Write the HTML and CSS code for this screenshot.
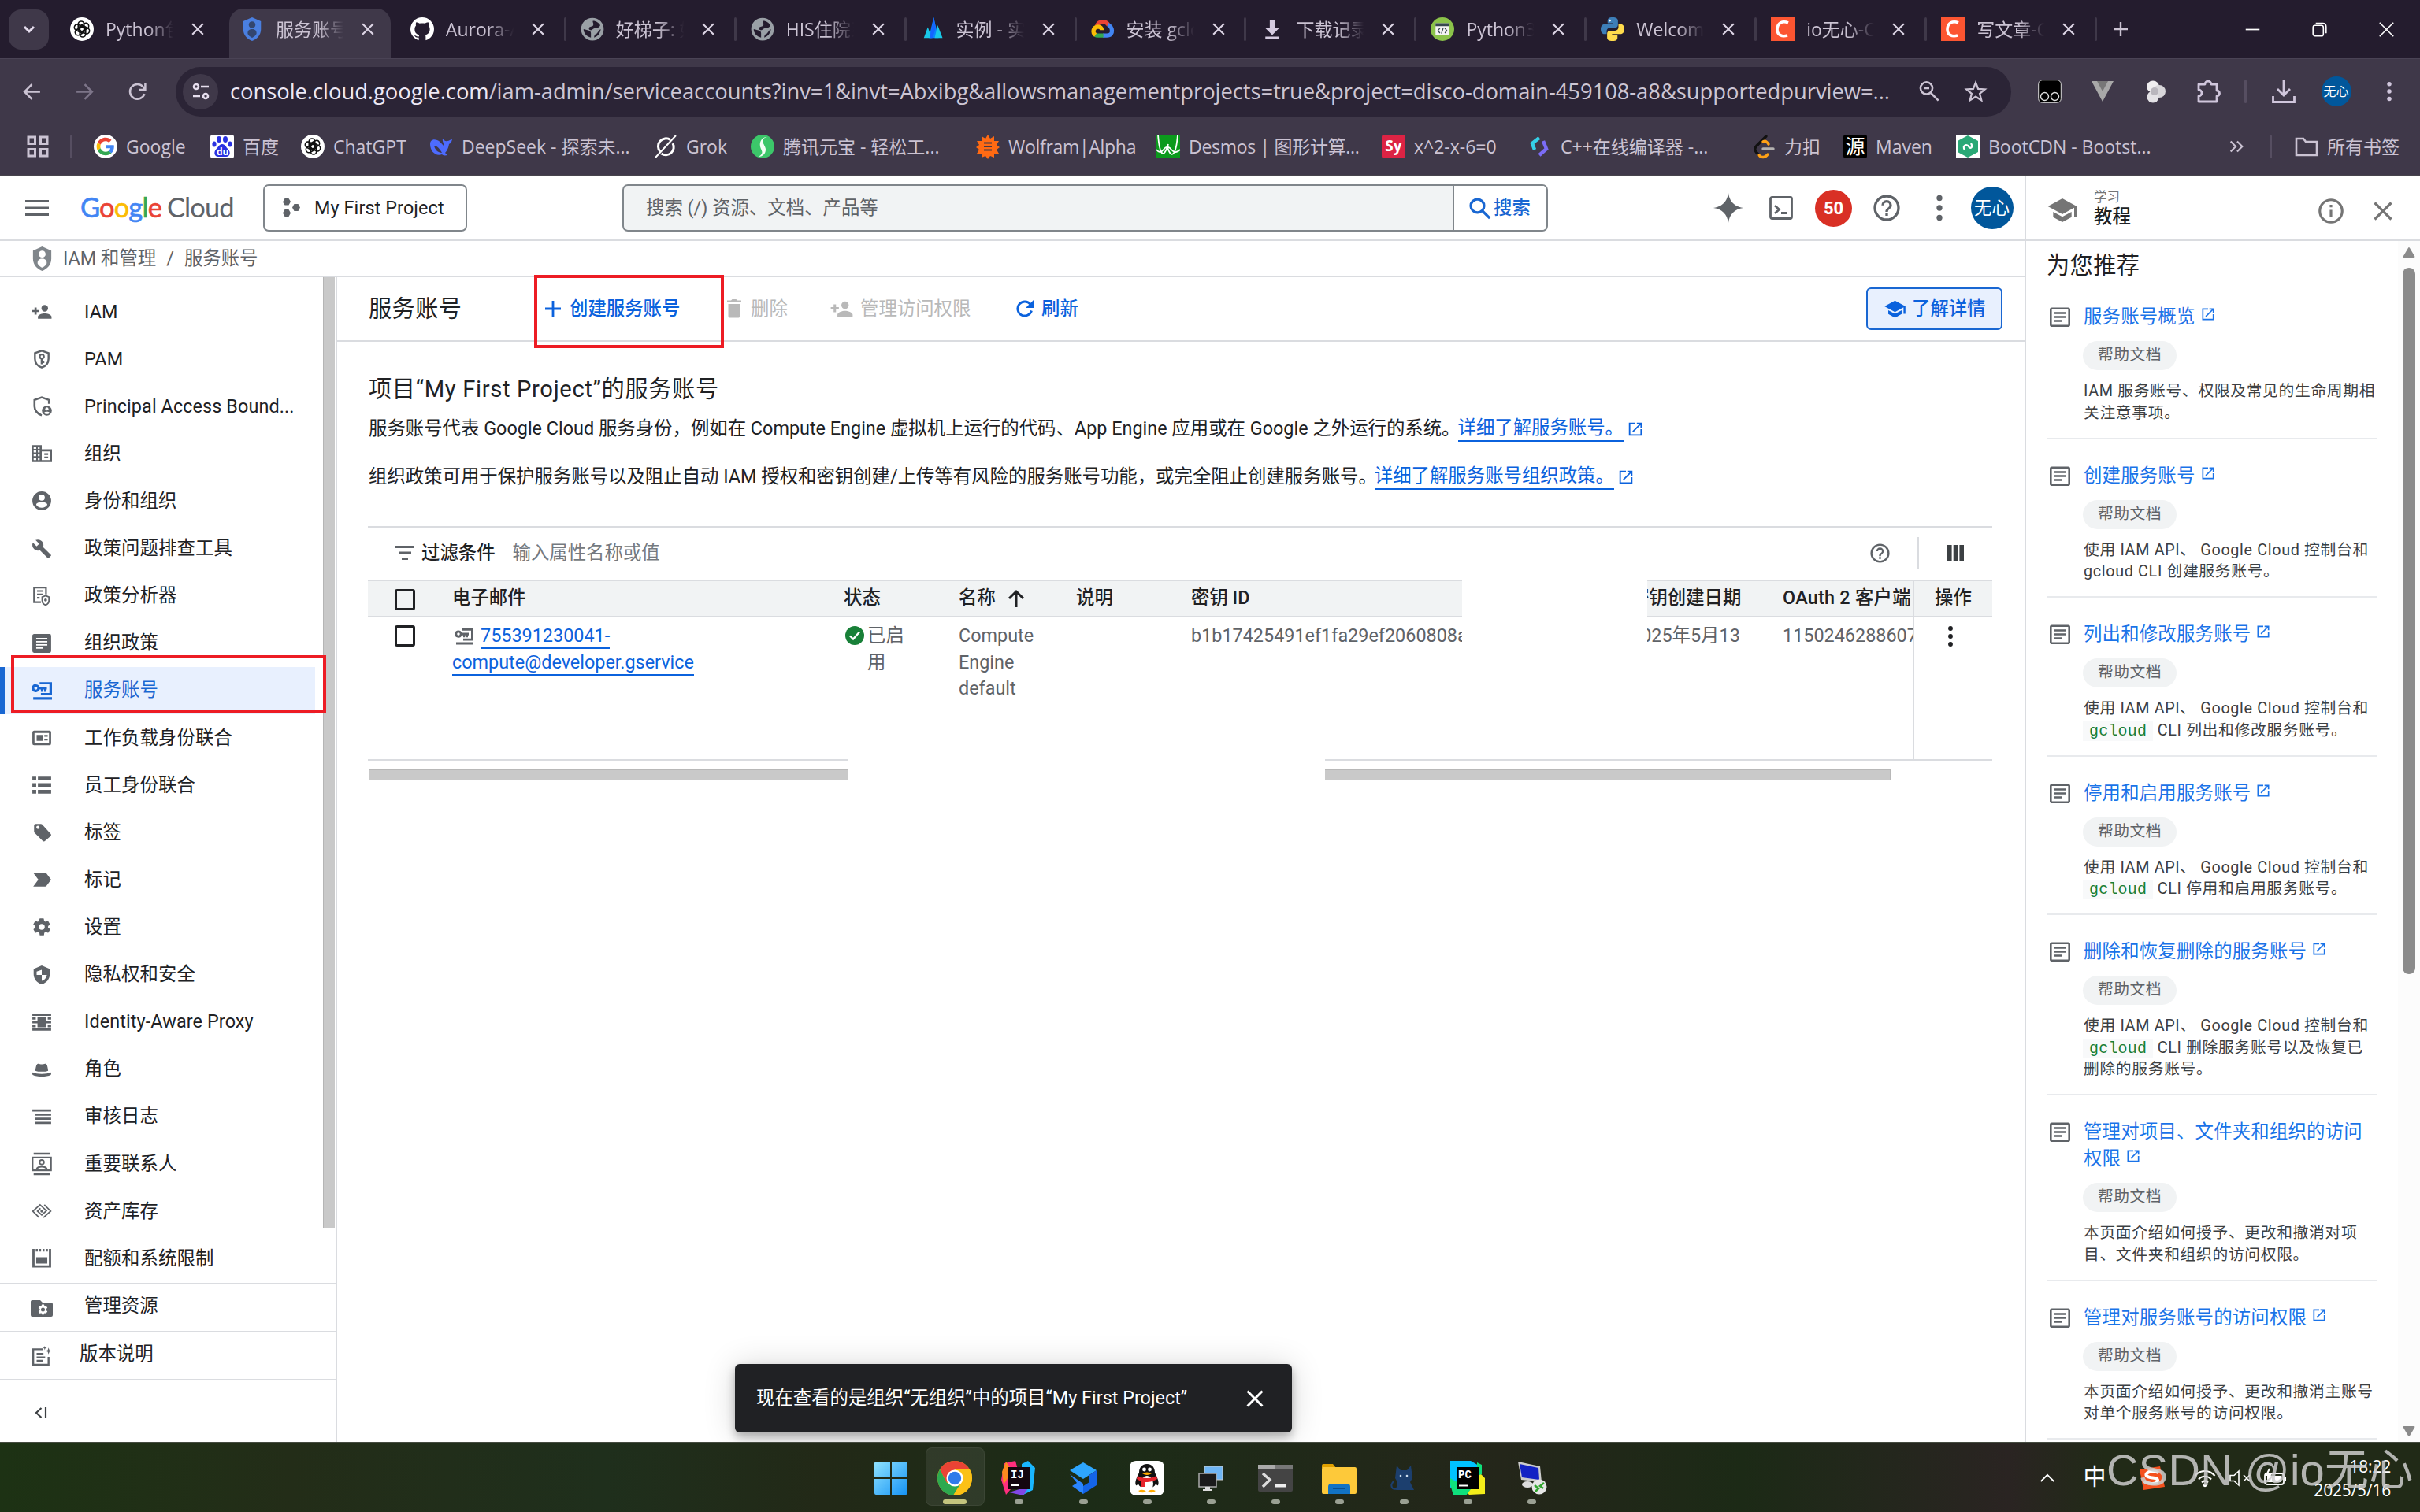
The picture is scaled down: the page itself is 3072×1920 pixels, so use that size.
FILE: index.html
```html
<!DOCTYPE html>
<html lang="zh-CN">
<head>
<meta charset="utf-8">
<title>服务账号 – IAM 和管理</title>
<link rel="stylesheet" href="styles.css">
</head>
<body>
<svg class="defs" aria-hidden="true">
  <symbol id="close" viewBox="0 0 24 24"><path d="M19 6.400 17.600 5 12 10.600 6.400 5 5 6.400 10.600 12 5 17.600 6.400 19 12 13.400 17.600 19 19 17.600 13.400 12z"/></symbol>
  <symbol id="openai" viewBox="0 0 24 24"><circle cx="12" cy="12" r="12" fill="#fff"/><g fill="none" stroke="#111" stroke-width="1.300"><rect x="8.200" y="4" width="6" height="10.500" rx="3"/><rect x="8.200" y="4" width="6" height="10.500" rx="3" transform="rotate(60 12 12)"/><rect x="8.200" y="4" width="6" height="10.500" rx="3" transform="rotate(120 12 12)"/><rect x="8.200" y="4" width="6" height="10.500" rx="3" transform="rotate(180 12 12)"/><rect x="8.200" y="4" width="6" height="10.500" rx="3" transform="rotate(240 12 12)"/><rect x="8.200" y="4" width="6" height="10.500" rx="3" transform="rotate(300 12 12)"/></g></symbol>
  <symbol id="globe" viewBox="0 0 24 24"><circle cx="12" cy="12" r="11.500" fill="#9aa0a6"/><path fill="#241c2e" d="M10.500 20.500C6 19.500 3 16 3 12l4 1c2 .4 3.500 1 3.500 3zM12.500 3.500c3.500 0 6 2 7.500 4.500-1 2.500-3 3-5 3-2.500 0-3 2.500-5 2s-2-3 0-3.500 3-.5 3-2.500-1-2-.5-3.500zM20.500 12c-.5 4.500-3.300 7.500-6.800 8.500.2-2 .5-3 2-3.500 2-.8 2-3.500 4.800-5z"/></symbol>
  <symbol id="iamshield" viewBox="0 0 24 24"><path d="M12 0 21 4v8c0 6-4 10-9 12-5-2-9-6-9-12V4z"/><circle cx="12" cy="7.500" r="3.400" fill="var(--hole)"/><path fill="var(--hole)" d="M12 12c3.500 0 4.500 2 4.500 4.200 0 1.600-2.500 3.600-4.500 4.600-2-1-4.500-3-4.500-4.600C7.500 14 8.500 12 12 12z"/></symbol>
  <symbol id="csdn" viewBox="0 0 30 30"><rect width="30" height="30" fill="#fc5531"/><path d="M22 7c-7-3-14 0-14 8.500 0 7 6 9.500 13 7.500" fill="none" stroke="#fff" stroke-width="3.600"/></symbol>
  <symbol id="python" viewBox="0 0 24 24"><path fill="#3d7eb8" d="M12 0C8 0 7 1.500 7 3.500V6h5.500v1H4C1.500 7 0 9 0 12s1.500 5 3.500 5H6v-3c0-2 1.500-3.500 3.500-3.500h5c1.700 0 3-1.300 3-3v-4C17.500 1.500 16 0 12 0z"/><path fill="#ffdb4c" d="M12 24c4 0 5-1.500 5-3.500V18h-5.500v-1H20c2.500 0 4-2 4-5s-1.500-5-3.500-5H18v3c0 2-1.500 3.500-3.500 3.500h-5c-1.700 0-3 1.300-3 3v4c0 2 1.500 3.500 5.500 3.500z"/><circle cx="9.300" cy="3.200" r="1.100" fill="#fff"/></symbol>
  <symbol id="personadd" viewBox="0 0 24 24"><path d="M15.500 11.800a3.900 3.900 0 1 0 0-7.800 3.900 3.900 0 0 0 0 7.800zM6 10V7H3.500v3H.5v2.300h3v3H6v-3h3V10zm9.500 3.800c-2.670 0-8 1.340-8 4V20h16v-2.200c0-2.660-5.330-4-8-4z"/></symbol>
  <symbol id="svcacct" viewBox="0 0 24 24"><path fill-rule="evenodd" d="M5 4.500a4.600 4.600 0 1 0 4.300 6.200H11v2.600h2.300v-2.600h1.400v2.600H17v-2.600h1V7.500H9.300A4.600 4.600 0 0 0 5 4.500zm0 2.800a1.800 1.800 0 1 1 0 3.600 1.800 1.800 0 0 1 0-3.600z"/><path d="M9.500 2H24v15.500H11v-2.700h10V4.700H9.500zM2 19.600h22v3H2z"/></symbol>
  <symbol id="cap" viewBox="0 0 24 24"><path d="M5 13.200v4L12 21l7-3.800v-4L12 17zM12 3 1 9l11 6 9-4.900V17h2V9z"/></symbol>
  <symbol id="ext" viewBox="0 0 24 24"><path d="M19 19H5V5h7V3H3v18h18v-9h-2zM14 3v2h3.600L7.800 14.800l1.400 1.400L19 6.400V10h2V3z"/></symbol>
  <symbol id="doc" viewBox="0 0 26 26"><rect x="1.300" y="1.800" width="23.400" height="22" rx="1.500" fill="none" stroke="currentColor" stroke-width="2.600"/><path d="M5.500 7.500h15M5.500 12.500h15M5.500 17.500h10" stroke="currentColor" stroke-width="2.400"/></symbol>
  <symbol id="help" viewBox="0 0 24 24"><path d="M11 18h2v-2h-2zm1-16a10 10 0 1 0 0 20 10 10 0 0 0 0-20zm0 18a8 8 0 1 1 0-16 8 8 0 0 1 0 16zm0-14a4 4 0 0 0-4 4h2a2 2 0 1 1 4 0c0 2-3 1.750-3 5h2c0-2.250 3-2.500 3-5a4 4 0 0 0-4-4z"/></symbol>
  <symbol id="more" viewBox="0 0 24 24"><circle cx="12" cy="4.500" r="2.200"/><circle cx="12" cy="12" r="2.200"/><circle cx="12" cy="19.500" r="2.200"/></symbol>
  <symbol id="gear" viewBox="0 0 24 24"><path d="M19.400 13c0-.3.100-.6.100-1s0-.7-.1-1l2.100-1.600c.2-.2.300-.4.100-.7l-2-3.400c-.1-.2-.4-.3-.6-.2l-2.500 1c-.5-.4-1.100-.7-1.700-1l-.4-2.600c0-.3-.2-.5-.5-.5h-4c-.2 0-.4.200-.5.400l-.4 2.700c-.6.300-1.200.6-1.700 1l-2.500-1c-.2-.1-.5 0-.6.200l-2 3.400c-.1.300-.1.500.1.700L4.600 11c0 .3-.1.700-.1 1s0 .700.1 1l-2.100 1.600c-.2.200-.3.400-.1.700l2 3.400c.1.200.4.300.6.200l2.500-1c.5.400 1.100.7 1.700 1l.4 2.600c0 .3.200.5.500.5h4c.2 0 .4-.2.500-.4l.4-2.700c.6-.3 1.200-.6 1.700-1l2.500 1c.2.100.5 0 .6-.2l2-3.400c.1-.3.100-.5-.1-.7zM12 15.500a3.500 3.500 0 1 1 0-7 3.500 3.500 0 0 1 0 7z"/></symbol>
  <symbol id="google-g" viewBox="0 0 48 48"><circle cx="24" cy="24" r="24" fill="#fff"/><g transform="translate(6 6) scale(.75)"><path fill="#ea4335" d="M24 9.500c3.500 0 6.700 1.200 9.200 3.600l6.900-6.900C35.900 2.400 30.500 0 24 0 14.600 0 6.500 5.400 2.600 13.200l8 6.200C12.400 13.700 17.700 9.500 24 9.500z"/><path fill="#4285f4" d="M47 24.500c0-1.600-.2-3.100-.4-4.500H24v9h12.900c-.6 3-2.300 5.500-4.800 7.200l7.700 6C44.400 38 47 31.800 47 24.500z"/><path fill="#fbbc05" d="M10.500 28.600a14.500 14.500 0 0 1 0-9.200l-8-6.200a24 24 0 0 0 0 21.600z"/><path fill="#34a853" d="M24 48c6.500 0 11.900-2.100 15.900-5.800l-7.700-6c-2.200 1.500-4.900 2.300-8.200 2.300-6.300 0-11.600-4.200-13.500-9.900l-8 6.200C6.500 42.600 14.600 48 24 48z"/></g></symbol>
</svg>

<header class="chrome">
  <div class="tabstrip">
    <button class="tabsearch"><svg viewBox="0 0 24 24"><path d="m6 9 6 6 6-6" fill="none" stroke="currentColor" stroke-width="3"/></svg></button>
    <div class="tabs">
      <div class="tab nosep"><svg><use href="#openai"/></svg><span>Python包管</span><svg class="x"><use href="#close"/></svg></div>
      <div class="tab active"><svg class="blue"><use href="#iamshield"/></svg><span>服务账号 –</span><svg class="x"><use href="#close"/></svg></div>
      <div class="tab"><svg viewBox="0 0 24 24"><circle cx="12" cy="12" r="12" fill="#fff"/><path fill="#241c2e" d="M8.500 24v-3.500c-3 .6-3.600-1.200-4.500-2 1.800-.2 2 1.500 4.600 1l.4-1.700C6 17.300 4.300 15.500 4.300 12c0-1.500.5-2.700 1.300-3.700-.3-1.200-.2-2.500.3-3.400 1.300 0 2.400.6 3.400 1.300 1.800-.4 3.600-.4 5.400 0 1-.7 2.100-1.300 3.400-1.300.5.900.6 2.200.3 3.400.8 1 1.300 2.200 1.300 3.700 0 3.500-1.700 5.300-4.700 5.800.4.700.5 1.200.5 2V24z"/></svg><span>Aurora-Ad</span><svg class="x"><use href="#close"/></svg></div>
      <div class="tab"><svg><use href="#globe"/></svg><span>好梯子: 好</span><svg class="x"><use href="#close"/></svg></div>
      <div class="tab"><svg><use href="#globe"/></svg><span>HIS住院系</span><svg class="x"><use href="#close"/></svg></div>
      <div class="tab"><svg viewBox="0 0 24 24"><path fill="#0a84ff" d="m13 0 5 21H8z"/><path fill="#19c8e8" d="m7 10 4 11H3zM17 8l5 13h-8z"/><path fill="#1565ff" d="m13 0 2 11-3 10H9z"/></svg><span>实例 - 实例</span><svg class="x"><use href="#close"/></svg></div>
      <div class="tab"><svg viewBox="0 0 24 24"><g fill="none" stroke-width="4.200"><path stroke="#ea4335" d="M6 8.500C8 3.500 15 3 17.800 8"/><path stroke="#4285f4" d="M17 7.500c4.500 1.500 7 11-1 11h-4"/><path stroke="#34a853" d="M12.500 18.500H7c-1 0-2-.2-2.800-.8"/><path stroke="#fbbc05" d="M4.500 18C1 15.500 2 10 7 9.500c2 0 4 1.500 4 3.500"/></g></svg><span>安装 gclou</span><svg class="x"><use href="#close"/></svg></div>
      <div class="tab"><svg viewBox="0 0 24 24" class="pale"><path d="M9.500 3h5v8h4.500l-7 7-7-7h4.500zM5 19.500h14V22H5z"/></svg><span>下载记录</span><svg class="x"><use href="#close"/></svg></div>
      <div class="tab"><svg viewBox="0 0 24 24"><circle cx="12" cy="12" r="12" fill="#8bc34a"/><rect x="5" y="6" width="14" height="12" fill="#f4f4f4"/><path fill="#37474f" d="M5 6h14v3H5z"/><path d="m9.500 11-2 2.500 2 2.500m5-5 2 2.500-2 2.500M13 10.500l-2 6" fill="none" stroke="#37474f"/></svg><span>Python3.1</span><svg class="x"><use href="#close"/></svg></div>
      <div class="tab"><svg><use href="#python"/></svg><span>Welcome</span><svg class="x"><use href="#close"/></svg></div>
      <div class="tab"><svg><use href="#csdn"/></svg><span>io无心-CSD</span><svg class="x"><use href="#close"/></svg></div>
      <div class="tab"><svg><use href="#csdn"/></svg><span>写文章-CS</span><svg class="x"><use href="#close"/></svg></div>
    </div>
    <svg class="newtab" viewBox="0 0 24 24"><path d="M12 3v18M3 12h18" stroke="currentColor" stroke-width="2.400"/></svg>
    <div class="winctl">
      <svg viewBox="0 0 24 24"><path d="M2 12h20" stroke="#fff" stroke-width="2"/></svg>
      <svg viewBox="0 0 24 24"><g fill="none" stroke="#fff" stroke-width="1.800"><rect x="2.500" y="6" width="15" height="15.500" rx="3"/><path d="M6.500 3h10c3 0 5 2 5 5v9.500"/></g></svg>
      <svg viewBox="0 0 24 24"><path d="m2 2 20 20M22 2 2 22" stroke="#fff" stroke-width="1.800"/></svg>
    </div>
  </div>
  <div class="toolbar">
    <div class="navbtns">
      <svg viewBox="0 0 24 24"><path d="M22 12H3m9-9-9 9 9 9" fill="none" stroke="currentColor" stroke-width="2.400"/></svg>
      <svg viewBox="0 0 24 24" class="off"><path d="M2 12h19m-9-9 9 9-9 9" fill="none" stroke="currentColor" stroke-width="2.400"/></svg>
      <svg viewBox="0 0 24 24"><path d="M20.500 14.500A9 9 0 1 1 19 6.300L21 9M21.500 2v7.500H14" fill="none" stroke="currentColor" stroke-width="2.400"/></svg>
    </div>
    <div class="urlbar">
      <i class="siteinfo"><svg viewBox="0 0 24 24"><g fill="none" stroke="currentColor" stroke-width="2.600"><circle cx="6" cy="6" r="3"/><path d="M12 6h10M2 18h9"/><circle cx="18" cy="18" r="3"/></g></svg></i>
      <p class="url"><b>console.cloud.google.com</b>/iam-admin/serviceaccounts?inv=1&amp;invt=Abxibg&amp;allowsmanagementprojects=true&amp;project=disco-domain-459108-a8&amp;supportedpurview=...</p>
      <svg viewBox="0 0 24 24"><g fill="none" stroke="currentColor" stroke-width="2.200"><circle cx="9" cy="8.500" r="6.500"/><path d="M13.500 13.500 22 22M6 8.500h6"/></g></svg>
      <svg viewBox="0 0 24 24"><path d="m12 2.500 2.700 6.800 7.300.5-5.600 4.700 1.800 7.100-6.200-3.900-6.200 3.900 1.800-7.100L2 9.800l7.300-.5z" fill="none" stroke="currentColor" stroke-width="2"/></svg>
    </div>
    <div class="exts">
      <svg viewBox="0 0 30 30"><rect x=".7" y=".7" width="28.600" height="28.600" rx="5" fill="#000" stroke="#ddd"/><circle cx="8.500" cy="21.500" r="5" fill="none" stroke="#ddd" stroke-width="1.500"/><circle cx="21.500" cy="21.500" r="5" fill="none" stroke="#ddd" stroke-width="1.500"/></svg>
      <svg viewBox="0 0 30 30"><path d="M1 2h28L15 28z" fill="#a8a8a8"/><path d="M8 2h14l-7 13z" fill="#777"/></svg>
      <svg viewBox="0 0 30 30"><ellipse cx="12" cy="9" rx="8" ry="7.500" fill="#f0eef0"/><circle cx="20" cy="15" r="8" fill="#d8d6da"/><circle cx="12" cy="22" r="7.500" fill="#e4e2e6"/><circle cx="14" cy="15" r="5" fill="#b9b6bd"/></svg>
      <svg viewBox="0 0 30 30"><path d="M3 6h8a4 4 0 0 1 8 0h7v8a3.500 3.500 0 0 1 0 7v7H3v-7a4 4 0 0 0 0-8z" fill="none" stroke="currentColor" stroke-width="2.800" stroke-linejoin="round"/></svg>
    </div>
    <i class="vsep"></i>
    <div class="exts">
      <svg viewBox="0 0 30 30"><path d="M15 1v18m-8-7 8 8 8-8M1.500 21v7.500h27V21" fill="none" stroke="currentColor" stroke-width="2.800"/></svg>
      <span class="avatar small">无心</span>
      <svg viewBox="0 0 24 24"><use href="#more"/></svg>
    </div>
  </div>
  <div class="bookmarks">
    <svg viewBox="0 0 28 28" class="appsico"><g fill="none" stroke="currentColor" stroke-width="3"><path d="M2 2h8.500v8.500H2zM17.500 2H26v8.500h-8.500zM2 17.500h8.500V26H2zM17.500 17.500H26V26h-8.500z"/></g></svg>
    <i class="vsep"></i>
    <a><svg><use href="#google-g"/></svg>Google</a>
    <a><svg viewBox="0 0 30 30"><rect width="30" height="30" rx="3" fill="#fff"/><g fill="#2932e1"><ellipse cx="11" cy="6" rx="3" ry="4"/><ellipse cx="19" cy="6" rx="3" ry="4"/><ellipse cx="5" cy="12" rx="2.600" ry="3.600"/><ellipse cx="25" cy="12" rx="2.600" ry="3.600"/><path d="M15 12c4 0 5 4 8 7s2 9-3 9H10c-5 0-6-6-3-9s4-7 8-7z"/></g><text x="8" y="26" font-size="12" font-weight="700" fill="#fff">du</text></svg>百度</a>
    <a><svg><use href="#openai"/></svg>ChatGPT</a>
    <a><svg viewBox="0 0 30 30"><path fill="#4d6bfe" d="M1 12c0-5 4-7 9-5 3 1 5 4 8 7 1-2-2-6-1-9 1 2 4 4 6 3 2 0 4-2 6-2-1 4-2 5-4 6-1 6-3 9-5 11l3 3c-4 1-6 0-7-1C8 28 1 21 1 12z"/><path fill="#3f3849" d="M6 14c4 0 8 5 10 9-5 0-9-4-10-9z"/></svg>DeepSeek - 探索未...</a>
    <a><svg viewBox="0 0 30 30"><g fill="none" stroke="#fff" stroke-width="3"><path d="M21 6.500a10 10 0 0 0-13 15M9.500 24A10 10 0 0 0 24 11"/><path d="M28 1 2 29" stroke-width="2"/></g></svg>Grok</a>
    <a><svg viewBox="0 0 30 30"><circle cx="15" cy="15" r="15" fill="#3cc76a"/><path d="M21 3c-12 3-2 10-2 16s-5 9-9 9c8-5 3-8 2-13S13 3 21 3z" fill="#f4fff6"/></svg>腾讯元宝 - 轻松工...</a>
    <a><svg viewBox="0 0 30 30"><path fill="#ff6a13" d="m15 0 3 5 5-3v6h6l-3 5 4 3-4 3 3 5h-6v5l-5-2-3 4-3-4-5 2v-5H1l3-5-4-3 4-3-3-5h6V2l5 3z"/><path d="M10 10.500h10M10 19.500h10M10 15h10" stroke="#3f3849" stroke-width="2"/></svg>Wolfram|Alpha</a>
    <a><svg viewBox="0 0 30 30"><rect width="30" height="30" fill="#0b9a1c"/><path d="M2 0c2 26 7 32 13 12M27 0C25 26 19 32 14 16M0 19c3 4 6 4 9 0s6-5 10 0 8 3 11 0" fill="none" stroke="#fff" stroke-width="1.800"/></svg>Desmos | 图形计算...</a>
    <a><i class="sy">Sy</i>x^2-x-6=0</a>
    <a><svg viewBox="0 0 30 30"><g fill="none" stroke-width="4.500"><path stroke="#35d0e8" d="M14 4 5 11l3 8"/><path stroke="#7b6cf6" d="m14 26 9-8-4-10"/></g></svg>C++在线编译器 -...</a>
    <a><svg viewBox="0 0 30 30"><g fill="none" stroke-width="3.400" stroke-linecap="round"><path stroke="#111" d="M18 2 6 14c-3 3-3 6 0 9l3 3"/><path stroke="#ffa116" d="M9 26c3 4 8 3 11-1M14 9c3-2 5 0 7 3"/><path stroke="#b3b1b0" d="M14 18h13"/></g></svg>力扣</a>
    <a><i class="yuan">源</i>Maven</a>
    <a><svg viewBox="0 0 30 30"><rect width="30" height="30" fill="#fff"/><path fill="#2aa876" d="m15 1 13 7v14l-13 7-13-7V8z"/><path d="M11 19c-4-5 3-8 5-4s6 1 3-4" fill="none" stroke="#fff" stroke-width="2.200"/></svg>BootCDN - Bootst...</a>
    <svg viewBox="0 0 24 24" class="chev"><path d="m4 5 7 7-7 7m9-14 7 7-7 7" fill="none" stroke="currentColor" stroke-width="2.400"/></svg>
    <i class="vsep"></i>
    <a><svg viewBox="0 0 30 30"><path d="M2 5h9l3 4h14v17H2z" fill="none" stroke="currentColor" stroke-width="2.600"/></svg>所有书签</a>
  </div>
</header>

<div class="page">
  <div class="app">
    <div class="gbar">
      <svg class="menu" viewBox="0 0 30 20"><path d="M0 1.500h30M0 10h30M0 18.500h30" stroke="currentColor" stroke-width="3"/></svg>
      <div class="logo"><b class="g1">G</b><b class="g2">o</b><b class="g3">o</b><b class="g1">g</b><b class="g4">l</b><b class="g2">e</b> <span>Cloud</span></div>
      <div class="project"><svg viewBox="0 0 24 24"><g><path d="m3.500 0h5L11 4 8.500 8.500h-5L1 4.500zM3.500 14h5L11 18.500 8.500 23h-5L1 18.500zM15.500 7h5L23 11.500 20.500 16h-5L13 11.500z"/></g></svg>My First Project</div>
      <div class="search"><span>搜索 (/) 资源、文档、产品等</span><button><svg viewBox="0 0 24 24"><g fill="none" stroke="currentColor" stroke-width="2.700"><circle cx="9.500" cy="9.500" r="7"/><path d="m14.500 14.500 8 8"/></g></svg>搜索</button></div>
      <div class="gactions">
        <svg viewBox="0 0 38 38" class="spark"><path d="M19 0c1.500 11 8 17.500 19 19-11 1.500-17.500 8-19 19C17.500 27 11 20.500 0 19 11 17.500 17.500 11 19 0z"/></svg>
        <svg viewBox="0 0 30 30" class="s30"><rect x="1.500" y="1.500" width="27" height="27" rx="2" fill="none" stroke="currentColor" stroke-width="2.800"/><path d="m7 12 5.500 5L7 22M15 21.500h8" fill="none" stroke="currentColor" stroke-width="2.800"/></svg>
        <span class="badge">50</span>
        <svg class="s40"><use href="#help"/></svg>
        <svg class="s40"><use href="#more"/></svg>
        <span class="avatar">无心</span>
      </div>
    </div>
    <div class="crumbs"><svg><use href="#iamshield"/></svg><span>IAM 和管理</span><span>/</span><span>服务账号</span></div>
    <div class="work">
      <nav class="side">
        <ul>
          <li><svg><use href="#personadd"/></svg>IAM</li>
          <li><svg viewBox="0 0 24 24"><path d="M12 2.200 20 5v6.500c0 5-3.400 8.700-8 10.300-4.600-1.600-8-5.300-8-10.300V5z" fill="none" stroke="currentColor" stroke-width="2.200"/><path d="M12 5.500a3.500 3.500 0 0 0-1.200 6.800V18h2.400v-1.500H15V14h-1.800v-1.700A3.500 3.500 0 0 0 12 5.500zm0 2.200a1.300 1.300 0 1 1 0 2.600 1.300 1.300 0 0 1 0-2.600z"/></svg>PAM</li>
          <li><svg viewBox="0 0 24 24"><path d="M12 22.500C7 21 3.500 16.500 3.500 12V4.500L12 1.500l8.500 3V9" fill="none" stroke="currentColor" stroke-width="2.400"/><circle cx="18" cy="17" r="5.800"/><circle cx="18" cy="15" r="1.900" fill="#fff"/><path d="M14.800 19.500c.8-1.800 5.600-1.800 6.400 0-1.500 2-4.900 2-6.400 0z" fill="#fff"/></svg>Principal Access Bound...</li>
          <li><svg viewBox="0 0 24 24"><path fill-rule="evenodd" d="M12 7V2H0v20h24V7zM5.500 19.500H2.500V17h3zm0-4.500H2.500v-2.500h3zm0-4.500H2.500V8h3zm0-4H2.500V4h3zm4 13H7.500V17h2zm0-4.500H7.500v-2.500h2zm0-4.500H7.500V8h2zm0-4H7.500V4h2zm12 13H12v-10h9.500zM19.500 11.500h-4.500v2h4.500zm0 4h-4.500v2h4.500z"/></svg>组织</li>
          <li><svg viewBox="0 0 24 24"><path fill-rule="evenodd" d="M12 1a11 11 0 1 0 0 22 11 11 0 0 0 0-22zm0 3.500a3.600 3.600 0 1 1 0 7.200 3.600 3.600 0 0 1 0-7.200zM12 20a7.600 7.600 0 0 1-6.500-3.500c0-2.200 4.300-3.300 6.500-3.300s6.500 1.100 6.500 3.300A7.600 7.600 0 0 1 12 20z"/></svg>身份和组织</li>
          <li><svg viewBox="0 0 24 24"><path d="m22.700 19-9.100-9.100c.9-2.300.4-5-1.500-6.900-2-2-5-2.400-7.400-1.300L9 6 6 9 1.600 4.700C.4 7.100.9 10.100 2.900 12.100c1.900 1.900 4.600 2.400 6.900 1.500l9.100 9.100c.4.400 1 .4 1.400 0l2.300-2.300c.5-.4.500-1.100.1-1.400z"/></svg>政策问题排查工具</li>
          <li><svg viewBox="0 0 24 24"><path d="M17 10V2H3v17h8M6.500 6h7M6.500 10h7M6.500 14h3" fill="none" stroke="currentColor" stroke-width="2"/><path d="m16.500 11.500 4 1.500v4c0 3-2 4.600-4 5.500-2-.9-4-2.500-4-5.500v-4z" fill="none" stroke="currentColor" stroke-width="1.700"/><circle cx="16.500" cy="16.500" r="1.700"/></svg>政策分析器</li>
          <li><svg viewBox="0 0 24 24"><path fill-rule="evenodd" d="M3 1h18a2 2 0 0 1 2 2v18a2 2 0 0 1-2 2H3a2 2 0 0 1-2-2V3c0-1.100.9-2 2-2zm2.500 4.500v1.700h13V5.500zm0 3.700v1.700h13V9.200zm0 3.700v1.700h13v-1.700zm0 3.700v1.700h8v-1.700z"/></svg>组织政策</li>
          <li class="on"><svg><use href="#svcacct"/></svg>服务账号</li>
          <li><svg viewBox="0 0 24 24"><path fill-rule="evenodd" d="M3 3.500h18a2 2 0 0 1 2 2v13a2 2 0 0 1-2 2H3a2 2 0 0 1-2-2v-13c0-1.100.9-2 2-2zm.5 2.700v11.600h17V6.200zM6 8.500h7v7H6zm9 0h4v2h-4zm0 4.500h4v2h-4z"/></svg>工作负载身份联合</li>
          <li><svg viewBox="0 0 24 24"><path d="M1 2h4.500v4.500H1zm6.500 0H23v4.500H7.500zM1 9.800h4.500v4.500H1zm6.500 0H23v4.500H7.500zM1 17.500h4.500V22H1zm6.500 0H23V22H7.500z"/></svg>员工身份联合</li>
          <li><svg viewBox="0 0 24 24"><path d="m22.400 13.600-9-10C13 3.200 12.500 2 11 2H5a2 2 0 0 0-2 2v7c0 .5.200 1 .6 1.400l9.500 9.600c.8.800 2 .8 2.800 0l6.500-5.600c.8-.8.800-2 0-2.800zM7.500 8a1.900 1.900 0 1 1 0-3.800 1.900 1.900 0 0 1 0 3.800z"/></svg>标签</li>
          <li><svg viewBox="0 0 24 24"><path d="M2 20h14c.7 0 1.300-.3 1.600-.8L23 12l-5.400-7.200C17.300 4.300 16.700 4 16 4H2l6 8z"/></svg>标记</li>
          <li><svg><use href="#gear"/></svg>设置</li>
          <li><svg viewBox="0 0 24 24"><path fill-rule="evenodd" d="M12 1 2.500 5v6c0 5.500 4 10.500 9.500 12 5.500-1.500 9.500-6.500 9.500-12V5zm0 5v6h6c-.4 3.500-2.800 6-6 7v-7H6V8z"/></svg>隐私权和安全</li>
          <li><svg viewBox="0 0 24 24"><path d="M1 2h22v2.600H1zm0 17.400h22V22H1zM7 6h10v12H7zM1 6.500h4v2.600H1zm18 0h4v2.600h-4zM1 11h22v2.400H1zm0 4.500h4V18H1zm18 0h4V18h-4z"/></svg>Identity-Aware Proxy</li>
          <li><svg viewBox="0 0 24 24"><path d="M7 5.500c1.500-.8 3 .5 5 .5s3.500-1.300 5-.5c1.500.7 2 4.500 2.500 8-3 1.500-12 1.500-15 0C5 10 5.500 6.200 7 5.500zM1.500 15.500c5 2.300 16 2.300 21 0 1 1 .5 2.500 0 3-5 2.500-16 2.500-21 0-.5-.5-1-2 0-3z"/></svg>角色</li>
          <li><svg viewBox="0 0 24 24"><path d="M1 3.500h22V6H1zM4.500 8.300H23v2.500H4.500zm0 4.900H23v2.500H4.500zm0 4.800H23v2.500H4.500z"/></svg>审核日志</li>
          <li><svg viewBox="0 0 24 24"><path d="M2.500 0h19M2.500 24h19" stroke="currentColor" stroke-width="2.400"/><rect x="1.200" y="4.500" width="21.600" height="15" fill="none" stroke="currentColor" stroke-width="2"/><circle cx="12" cy="10" r="2.600" fill="none" stroke="currentColor" stroke-width="1.800"/><path d="M6 18.500c1-4.500 11-4.500 12 0" fill="none" stroke="currentColor" stroke-width="2"/></svg>重要联系人</li>
          <li><svg viewBox="0 0 24 24"><g fill="none" stroke="currentColor" stroke-width="1.600"><path d="m9 19.500-7.500-7.500L10 4.500l7.500 7-5.500 5-5-4.500 3.500-3.300M15 4.500l7.500 7.500-8.500 7.500"/></g><circle cx="12" cy="12" r="1.600"/></svg>资产库存</li>
          <li><svg viewBox="0 0 24 24"><path d="M1 1h2.600v19H20.400V1H23v21.500H1zM5.500 10.500h13V18h-13zM5 1h2.400v3H5zm4 0h2.200v3H9zm4 0h2.200v3H13zm4 0h2.200v3H17z"/></svg>配额和系统限制</li>
        </ul>
        <div class="scroll"></div>
        <div class="extra"><svg viewBox="0 0 28 24"><path fill-rule="evenodd" d="M2 2h10l3 3h11a2 2 0 0 1 2 2v14a2 2 0 0 1-2 2H2a2 2 0 0 1-2-2V4c0-1.100.9-2 2-2zm12 5.500-.5 2.200-2-.8-1.700 2.800 1.700 1.500v1.600l-1.700 1.500 1.700 2.800 2-.8.5 2h3l.5-2 2 .8 1.700-2.800-1.700-1.500v-1.600l1.700-1.500-1.700-2.800-2 .8-.5-2.200zm1.500 4a2.500 2.500 0 1 1 0 5 2.500 2.500 0 0 1 0-5z"/></svg>管理资源</div>
        <div class="extra rel"><svg viewBox="0 0 24 24"><path d="M13 4H2v18h18v-9M6 9.500h8M6 13.500h10M6 17.500h7" fill="none" stroke="currentColor" stroke-width="2.200"/><path d="m20 2 1 3 3 1-3 1-1 3-1-3-3-1 3-1zM15.500 0l.6 1.900L18 2.500l-1.900.6-.6 1.900-.6-1.900L13 2.500l1.900-.6z"/></svg>版本说明</div>
        <div class="collapse"><svg viewBox="0 0 16 16"><path d="M8.500 2 2 8l6.500 6M14 1v14" fill="none" stroke="currentColor" stroke-width="2.200"/></svg></div>
        <i class="mark"></i>
      </nav>
      <main class="main">
        <div class="mhead">
          <h1>服务账号</h1>
          <div class="act"><svg viewBox="0 0 24 24"><path d="M12 2v20M2 12h20" stroke="currentColor" stroke-width="2.800"/></svg>创建服务账号<i class="mark2"></i></div>
          <div class="act off"><svg viewBox="0 0 18 24"><path d="M1.500 6h15v15.500a2 2 0 0 1-2 2h-11a2 2 0 0 1-2-2zM0 1.500h5L6.500 0h5L13 1.500h5V4H0z"/></svg>删除</div>
          <div class="act off"><svg><use href="#personadd"/></svg>管理访问权限</div>
          <div class="act"><svg viewBox="0 0 24 24"><path d="M20.500 14.500A9 9 0 1 1 19 6.500L21 9" fill="none" stroke="currentColor" stroke-width="2.800"/><path d="M23 1v10H13z"/></svg>刷新</div>
          <button class="learn"><svg><use href="#cap"/></svg>了解详情</button>
        </div>
        <section class="body">
          <h2>项目<q>“</q>My First Project<q>”</q>的服务账号</h2>
          <p>服务账号代表 Google Cloud 服务身份，例如在 Compute Engine 虚拟机上运行的代码、App Engine 应用或在 Google 之外运行的系统。<a>详细了解服务账号。</a><svg><use href="#ext"/></svg></p>
          <p>组织政策可用于保护服务账号以及阻止自动 IAM 授权和密钥创建/上传等有风险的服务账号功能，或完全阻止创建服务账号。<a>详细了解服务账号组织政策。</a><svg><use href="#ext"/></svg></p>
          <div class="filter">
            <svg viewBox="0 0 24 20" class="fi"><path d="M0 2.500h24M4 10h16M8 17.500h8" stroke="currentColor" stroke-width="3"/></svg>
            <b>过滤条件</b><span>输入属性名称或值</span>
            <svg class="fh"><use href="#help"/></svg><i></i>
            <svg viewBox="0 0 21 21" class="fc"><path d="M0 0h5.600v21H0zM7.700 0h5.600v21H7.700zM15.400 0H21v21h-5.600z"/></svg>
          </div>
          <div class="table">
            <div class="tr th">
              <div class="ck"><i></i></div><div>电子邮件</div><div>状态</div><div>名称 <svg viewBox="0 0 24 24"><path d="M12 23V3M3 12l9-9 9 9" fill="none" stroke="currentColor" stroke-width="3"/></svg></div><div>说明</div><div>密钥 ID</div><div>密钥创建日期</div><div class="clip">OAuth 2 客户端 ID</div><div class="ops">操作</div>
            </div>
            <div class="tr td">
              <div class="ck"><i></i></div>
              <div><svg class="key"><use href="#svcacct"/></svg><a>755391230041-</a><br><a>compute@developer.gservice</a></div>
              <div class="st"><svg viewBox="0 0 24 24"><circle cx="12" cy="12" r="12" fill="#188038"/><path d="m6 12.500 4 4 8-9" fill="none" stroke="#fff" stroke-width="2.400"/></svg>已启用</div>
              <div>Compute<br>Engine<br>default</div><div></div><div>b1b17425491ef1fa29ef2060808a</div><div>2025年5月13</div><div class="clip">11502462886071</div>
              <div class="ops"><svg><use href="#more"/></svg></div>
            </div>
            <div class="hbar"></div>
            <i class="patch top"></i><i class="patch low"></i>
          </div>
        </section>
      </main>
    </div>
  </div>
  <aside class="panel">
    <div class="phead"><svg class="pc"><use href="#cap"/></svg><div><small>学习</small><b>教程</b></div>
      <svg class="pi" viewBox="0 0 24 24"><path d="M11 7h2v2h-2zm0 4h2v6h-2zm1-9a10 10 0 1 0 0 20 10 10 0 0 0 0-20zm0 18a8 8 0 1 1 0-16 8 8 0 0 1 0 16z"/></svg>
      <svg class="px"><use href="#close"/></svg></div>
    <div class="pbody">
      <div class="plist">
        <h3>为您推荐</h3>
        <article><svg><use href="#doc"/></svg><div><h4>服务账号概览 <svg><use href="#ext"/></svg></h4><em>帮助文档</em><p>IAM 服务账号、权限及常见的生命周期相关注意事项。</p></div></article>
        <article><svg><use href="#doc"/></svg><div><h4>创建服务账号 <svg><use href="#ext"/></svg></h4><em>帮助文档</em><p>使用 IAM API、 Google Cloud 控制台和<br>gcloud CLI 创建服务账号。</p></div></article>
        <article><svg><use href="#doc"/></svg><div><h4>列出和修改服务账号 <svg><use href="#ext"/></svg></h4><em>帮助文档</em><p>使用 IAM API、 Google Cloud 控制台和<br><code>gcloud</code> CLI 列出和修改服务账号。</p></div></article>
        <article><svg><use href="#doc"/></svg><div><h4>停用和启用服务账号 <svg><use href="#ext"/></svg></h4><em>帮助文档</em><p>使用 IAM API、 Google Cloud 控制台和<br><code>gcloud</code> CLI 停用和启用服务账号。</p></div></article>
        <article><svg><use href="#doc"/></svg><div><h4>删除和恢复删除的服务账号 <svg><use href="#ext"/></svg></h4><em>帮助文档</em><p>使用 IAM API、 Google Cloud 控制台和<br><code>gcloud</code> CLI 删除服务账号以及恢复已<br>删除的服务账号。</p></div></article>
        <article><svg><use href="#doc"/></svg><div><h4>管理对项目、文件夹和组织的访问<br>权限 <svg><use href="#ext"/></svg></h4><em>帮助文档</em><p>本页面介绍如何授予、更改和撤消对项<br>目、文件夹和组织的访问权限。</p></div></article>
        <article><svg><use href="#doc"/></svg><div><h4>管理对服务账号的访问权限 <svg><use href="#ext"/></svg></h4><em>帮助文档</em><p>本页面介绍如何授予、更改和撤消主账号<br>对单个服务账号的访问权限。</p></div></article>
      </div>
      <div class="pscroll"><svg viewBox="0 0 16 14"><path d="M8 1 15 13H1z" stroke="currentColor" stroke-linejoin="round" stroke-width="2"/></svg><i></i><svg viewBox="0 0 16 14"><path d="M8 13 1 1h14z" stroke="currentColor" stroke-linejoin="round" stroke-width="2"/></svg></div>
    </div>
  </aside>
  <div class="toast"><span>现在查看的是组织<q>“</q>无组织<q>”</q>中的项目<q>“</q>My First Project<q>”</q></span><svg><use href="#close"/></svg></div>
</div>

<footer class="taskbar">
  <div class="apps">
    <div class="start"><svg viewBox="0 0 42 42"><defs><linearGradient id="w" x2="1" y2="1"><stop stop-color="#8fe2ff"/><stop offset="1" stop-color="#1593f5"/></linearGradient></defs><path fill="url(#w)" d="M0 2a2 2 0 0 1 2-2h18v20H0zM22 0h18a2 2 0 0 1 2 2v18H22zM0 22h20v20H2a2 2 0 0 1-2-2zM22 22h20v18a2 2 0 0 1-2 2H22z"/></svg></div>
    <div class="cur"><svg viewBox="0 0 44 44"><circle cx="22" cy="22" r="22" fill="#fbbc05"/><path fill="#ea4335" d="M3 11a22 22 0 0 1 38 0H22L12 28z"/><path fill="#2da94f" d="M3 11a22 22 0 0 0 17 33l10-16-18 0z"/><path fill="#fbc116" d="M41 11a22 22 0 0 1-21 33l11-17c3-7 0-12-5-16z"/><circle cx="22" cy="22" r="10.500" fill="#fff"/><circle cx="22" cy="22" r="8.200" fill="#2f7bea"/></svg></div>
    <div><svg viewBox="0 0 44 44"><path fill="#ff2e7e" d="m4 3 14-3 6 22L6 43 0 24z"/><path fill="#ff8a1e" d="m1 14 5-13 8 12L3 30z"/><path fill="#19b6ff" d="m26 4 8-4 9 9-3 28-14 7z"/><path fill="#8147e6" d="m10 40 18 4 8-12z"/><rect x="9" y="8" width="27" height="28" fill="#14060f"/><text x="12" y="22" font-size="14" font-weight="700" fill="#fff">IJ</text><path d="M12 31h11" stroke="#fff" stroke-width="2"/></svg></div>
    <div><svg viewBox="0 0 44 44"><path fill="#2ea6ff" d="m22 2 17 10-17 11L5 12z"/><path fill="#1464e8" d="M39 12v19L22 42V32l8-5v-9z"/><path fill="#2a85ff" d="m5 17 17 12v13L8 32l6-4z"/></svg></div>
    <div><svg viewBox="0 0 44 44"><rect width="44" height="44" rx="8" fill="#fff"/><path fill="#111" d="M22 4c7 0 10 5 10 11 3 6 6 12 4 16-1 1-3-2-3-2-2 8-20 8-22 0 0 0-2 3-3 2-2-4 1-10 4-16 0-6 3-11 10-11z"/><ellipse cx="22" cy="29" rx="8" ry="10" fill="#fff"/><path fill="#e6242c" d="M10 19c6 4 18 4 24 0l1 4c-6 4-12 4-16 4v6h-5v-7l-5-3z"/><path fill="#ffab00" d="M16 16q6-3 12 0-6 4-12 0zM11 38q6-3 10 1-6 3-10-1zM33 38q-6-3-10 1 6 3 10-1z"/><circle cx="18.500" cy="11" r="2.400" fill="#fff"/><circle cx="25.500" cy="11" r="2.400" fill="#fff"/></svg></div>
    <div><svg viewBox="0 0 44 44"><rect x="14" y="7" width="23" height="17" fill="#6fb6f5" stroke="#ccc"/><rect x="7" y="16" width="22" height="17" fill="#1a1a1a" stroke="#aaa" stroke-width="1.500"/><path fill="#ddd" d="M15 33h6v3h3v2H12v-2h3z"/></svg></div>
    <div><svg viewBox="0 0 44 44"><rect y="5" width="44" height="34" rx="2" fill="#444"/><path fill="#aaa" d="M0 5h22v6H0z"/><path fill="#777" d="M22 5h22v6H22z"/><path d="m6 16 9 8-9 9" fill="none" stroke="#ddd" stroke-width="3.500"/><path d="M21 31.500h15" stroke="#eee" stroke-width="4"/></svg></div>
    <div><svg viewBox="0 0 44 44"><path fill="#e0a000" d="M0 6a2 2 0 0 1 2-2h12l4 5H0z"/><rect y="8" width="44" height="34" rx="2" fill="#fdc93a"/><path fill="#1273c4" d="M8 42V33a4 4 0 0 1 4-4h20a4 4 0 0 1 4 4v9z"/><path d="M14 35h16" stroke="#0a4f8e" stroke-width="2"/></svg></div>
    <div><svg viewBox="0 0 44 44"><path fill="#1c3f6e" d="m13 6 5 6h8l5-6 2 16-3 5 5 10H12l2-10-3-5z"/><path d="M13 35c-6 3-9-4-4-9" fill="none" stroke="#1c3f6e" stroke-width="2"/><circle cx="18" cy="19" r="1.300" fill="#cde"/><circle cx="26" cy="19" r="1.300" fill="#cde"/></svg></div>
    <div><svg viewBox="0 0 44 44"><path fill="#00c2ff" d="M0 0h26l10 6v18L0 34z"/><path fill="#f3ed1a" d="m36 14 8 8v20l-20 1-8-8z"/><path fill="#0fe07c" d="M0 30v-8l14 8 12 6-6 8H4zM34 2l6 3v12l-6 2z"/><rect x="8" y="8" width="28" height="28" fill="#000"/><text x="10" y="22" font-size="14" font-weight="700" fill="#fff">PC</text><path d="M11 31.500h11" stroke="#fff" stroke-width="2"/></svg></div>
    <div><svg viewBox="0 0 44 44"><path fill="#ccc" d="m5 1 28 6 2 20-26-3z"/><path fill="#1322c4" d="m7 4 24 5 1 15-22-3z"/><ellipse cx="17" cy="30" rx="7" ry="4" fill="#ddd"/><circle cx="32" cy="33" r="9.500" fill="#e6e6e6"/><path d="m26 31 5 4-4 4m11-11-5 4 4 3" fill="none" stroke="#31a52e" stroke-width="2.600"/></svg></div>
  </div>
  <div class="tray">
    <svg viewBox="0 0 24 24" class="t20"><path d="m2 17 10-10 10 10" fill="none" stroke="#fff" stroke-width="2.400"/></svg>
    <span class="ime">中</span>
    <svg viewBox="0 0 34 30" class="t34"><path fill="#f4511e" d="m1 4 26-4 6 26-27 4z"/><path d="M25 8c-8-4-18 0-15 4s14 1 14 6-12 5-17 1" fill="none" stroke="#fff" stroke-width="4"/></svg>
    <svg viewBox="0 0 28 24" class="t28"><g fill="none" stroke="#fff" stroke-width="2.200"><path d="M1.500 9C8 1 20 1 26.500 9M6 13.500c4.500-5 11.500-5 16 0M10 17.500c2.500-2.500 5.500-2.500 8 0"/></g><circle cx="14" cy="21" r="2.200" fill="#fff"/></svg>
    <svg viewBox="0 0 28 24" class="t28"><path d="M1 8.500h5L12 3v18l-6-5.500H1zM18 8l8 8m0-8-8 8" fill="none" stroke="#fff" stroke-width="1.600"/></svg>
    <svg viewBox="0 0 32 24" class="t32"><rect x="2" y="6" width="24" height="14" rx="3" fill="none" stroke="#fff" stroke-width="1.800"/><rect x="5" y="9" width="17" height="8" fill="#fff"/><path d="M28 10v6M8 0 4 8h5l-3 6" stroke="#fff" stroke-width="2" fill="none"/></svg>
    <div class="clock">18:22<br>2025/5/16</div>
  </div>
  <div class="wm">CSDN @io无心</div>
</footer>
</body>
</html>
```
FILE: styles.css
```css
* { box-sizing: border-box; }
body {
  margin: 0; width: 3072px; height: 1920px; overflow: hidden;
  display: flex; flex-direction: column; background: #fff;
  font: 23.4px/33px Roboto, "Noto Sans CJK SC", sans-serif; color: #202124;
}
h1, h2, h3, h4, p, ul { margin: 0; padding: 0; font-weight: 400; }
i, em { font-style: normal; }
svg { fill: currentColor; flex: none; overflow: visible; }
q { quotes: none; font-family: Roboto, sans-serif; }
button { font: inherit; padding: 0; border: 0; background: none; color: inherit; }
.defs { display: none; }

/* Browser frame */
.chrome {
  flex: none; height: 224px; background: #3f3849; border-bottom: 2px solid #47444c;
  font: 23px/32px "Open Sans", "Noto Sans CJK SC", sans-serif; color: #cbc3d3;
}
.tabstrip { height: 74px; background: #241c2e; display: flex; align-items: center; padding-left: 11px; }
.tabsearch { width: 51px; height: 51px; border-radius: 16px; background: #3f3849; display: grid; place-items: center; color: #e4dcec; }
.tabsearch svg { width: 24px; height: 24px; }
.tabs { display: flex; width: 2591px; margin-left: 8px; align-self: stretch; }
.tab { flex: 1 1 0; min-width: 0; display: flex; align-items: center; padding-left: 19px; position: relative; }
.tab > svg { width: 30px; height: 30px; }
.tab span { width: 88px; margin-left: 15px; overflow: hidden; white-space: nowrap; -webkit-mask-image: linear-gradient(90deg, #000 60%, transparent 98%); mask-image: linear-gradient(90deg, #000 60%, transparent 98%); }
.tab > svg.x { width: 26px; height: 26px; margin-left: 16px; color: #ddd5e5; }
.tab::after { content: ""; position: absolute; right: -1px; top: 22px; width: 3px; height: 30px; border-radius: 2px; background: #3f3849; }
.tab.nosep::after, .tab.active::after { display: none; }
.tab.active::before { content: ""; position: absolute; z-index: 0; inset: 11px 6px 0 5px; background: #3f3849; border-radius: 18px 18px 0 0; }
.tab.active > * { position: relative; }
.blue { color: #4a7fe0; --hole: #33466f; }
.pale { color: #d5cbe0; }
.newtab { width: 24px; height: 24px; margin-left: 19px; }
.winctl { margin-left: auto; display: flex; }
.winctl svg { width: 21px; height: 21px; margin: 0 32px; }
.toolbar { height: 86px; display: flex; align-items: center; padding: 0 0 3px 7px; border-top: 1px solid #4a4355; }
.navbtns, .exts { display: grid; grid-auto-flow: column; grid-auto-columns: 67px; place-items: center; }
.navbtns svg { width: 25px; height: 25px; }
.navbtns .off { color: #7d7589; }
.urlbar { width: 2330px; height: 63px; margin: 0 15px; border-radius: 32px; background: #2b2436; display: flex; align-items: center; }
.siteinfo { width: 45px; height: 45px; margin-left: 9px; border-radius: 50%; background: #3f3849; display: grid; place-items: center; color: #e6deee; }
.siteinfo svg { width: 24px; height: 24px; }
.url { flex: 1; min-width: 0; margin-left: 15px; font-size: 27.400px; letter-spacing: -.05px; white-space: nowrap; color: #cdc6d4; }
.url b { font-weight: 400; color: #eee8f4; }
.urlbar > svg { width: 28px; height: 28px; margin-right: 31px; }
.exts { color: #d0c6dc; }
.exts svg { width: 30px; height: 30px; }
.vsep { width: 3px; height: 30px; border-radius: 2px; background: #564e61; }
.toolbar .vsep { margin: 0 13px; }
.avatar { width: 54px; height: 54px; border-radius: 50%; background: #01579b; color: #fff; display: grid; place-items: center; font-size: 22.500px; line-height: 1; }
.avatar.small { width: 38px; height: 38px; font-size: 16px; }
.bookmarks {
  height: 52px; display: grid; align-items: center; padding-left: 34px; white-space: nowrap;
  grid-template-columns: 55px 30px 148px 115px 163px 285px 123px 286px 229px 286px 186px 284px 116px 143px 345px 53px 32px 1fr;
}
.bookmarks a { display: flex; align-items: center; gap: 11px; }
.bookmarks a > svg, .sy, .yuan { width: 30px; height: 30px; }
.bookmarks .appsico { width: 28px; height: 28px; }
.bookmarks a:nth-child(9), .bookmarks a:nth-child(10) { letter-spacing: -.3px; }
.chev { width: 22px; height: 22px; }
.sy { background: #dc2344; border-radius: 3px; color: #fff; font-weight: 700; font-size: 19px; line-height: 28px; text-align: center; }
.yuan { background: #000; border-radius: 3px; color: #fff; font-size: 25px; line-height: 28px; text-align: center; }

/* Console header */
.page { flex: 1; min-height: 0; display: flex; position: relative; }
.app { width: 2570px; display: flex; flex-direction: column; }
.gbar {
  height: 82px; border-bottom: 2px solid #dadce0; padding-left: 32px;
  display: grid; align-items: center; grid-template-columns: 70px 232px 259px 197px 1175px 195px 402px; color: #5f6368;
}
.gbar .menu { width: 30px; height: 20px; }
.logo { font: 34.500px/40px Lato, sans-serif; white-space: nowrap; letter-spacing: -.9px; margin-top: -2px; }
.logo b { font-weight: 400; -webkit-text-stroke: .6px; }
.logo span { margin-left: -1px; }
.g1 { color: #4285f4; } .g2 { color: #ea4335; } .g3 { color: #fbbc04; } .g4 { color: #34a853; }
.project { height: 60px; border: 2px solid #80868b; border-radius: 7px; display: flex; align-items: center; gap: 17px; padding-left: 22px; color: #202124; letter-spacing: .1px; }
.project svg { width: 24px; height: 24px; color: #5f6368; }
.search { grid-column: 5; height: 60px; border: 2px solid #80868b; border-radius: 7px; background: #f1f3f4; display: flex; align-items: center; overflow: hidden; }
.search span { flex: 1; padding-left: 28px; }
.search button { width: 118px; height: 100%; background: #fff; border-left: 1px solid #80868b; display: flex; align-items: center; gap: 3px; padding-left: 18px; color: #1967d2; font-weight: 500; }
.search button svg { width: 29px; height: 29px; }
.gactions { grid-column: 7; display: grid; grid-template-columns: repeat(6, 67px); place-items: center; }
.spark { width: 38px; height: 38px; } .s30 { width: 30px; height: 30px; } .s40 { width: 40px; height: 40px; }
.badge { width: 47px; height: 47px; border-radius: 50%; background: #d93025; color: #fff; font-weight: 700; font-size: 22px; display: grid; place-items: center; }
.crumbs { height: 46px; border-bottom: 2px solid #dadce0; padding-left: 38px; display: flex; align-items: center; color: #5f6368; white-space: pre; }
.crumbs svg { width: 31px; height: 31px; color: #80868b; --hole: #fff; margin-right: 11px; }
.crumbs span + span { margin-left: 13px; }
.work { flex: 1; min-height: 0; display: flex; }

/* Navigation */
.side { width: 428px; border-right: 2px solid #dadce0; position: relative; display: flex; flex-direction: column; padding-top: 14px; }
.side ul { list-style: none; height: 1263px; color: #202124; }
.side li { height: 60.120px; display: flex; align-items: center; gap: 41px; padding-left: 40px; letter-spacing: .1px; }
.side li svg { width: 26px; height: 26px; color: #5f6368; }
.side li.on { width: 400px; background: #e8f0fe; border-left: 6px solid #1967d2; padding-left: 34px; color: #1967d2; }
.side li.on svg { color: #1967d2; }
.side .scroll { position: absolute; right: 1px; top: 0; width: 15px; height: 1207px; background: #c9c9c9; border-left: 1px solid #b5b5b5; }
.extra { height: 61px; border-top: 2px solid #dadce0; display: flex; align-items: center; gap: 40px; padding: 0 0 5px 39px; }
.extra svg { width: 28px; height: 26px; margin-top: 6px; color: #5f6368; }
.extra.rel { gap: 34px; }
.collapse { border-top: 2px solid #dadce0; padding: 25px 0 0 43px; color: #3c4043; }
.collapse svg { width: 18px; height: 16px; }
.mark { position: absolute; left: 14px; top: 480px; width: 400px; height: 74px; border: 4px solid #ed1c24; }

/* Service accounts page */
.main { flex: 1; min-width: 0; }
.mhead { height: 82px; border-bottom: 2px solid #dadce0; display: grid; align-items: center; grid-template-columns: 222px 231px 134px 234px 1080px 173px; padding-left: 40px; }
h1, h2, h3 { font-size: 29.200px; line-height: 40px; white-space: nowrap; letter-spacing: .4px; }
h2 { letter-spacing: .65px; }
.act { display: flex; align-items: center; gap: 9px; color: #0b62dd; font-weight: 500; position: relative; }
.act svg { width: 24px; height: 24px; }
.act.off { color: #b9b9b9; font-weight: 400; }
.act:nth-child(3) { margin-left: -1px; }
.act:nth-child(4) svg { width: 29px; height: 29px; margin-left: -1px; }
.mark2 { position: absolute; left: -12px; top: -27px; width: 241px; height: 93px; border: 4px solid #ed1c24; }
.learn { height: 54px; border: 2px solid #1967d2; border-radius: 6px; background: #e8f0fe; color: #0b62dd; font-weight: 500; display: flex; align-items: center; gap: 7px; padding-left: 20px; }
.learn svg { width: 29px; height: 29px; }
.body { padding: 40px 0 0 39px; width: 2101px; }
.body p { display: flex; align-items: center; white-space: pre; margin: 14px 0 0 1px; height: 33px; }
.body p + p { margin-top: 28px; }
.body h2 { margin-left: 1px; }
.body a { color: #0b62dd; border-bottom: 2px solid currentColor; line-height: 31px; }
.body p a { margin-left: -3px; }
.body p svg { width: 22px; height: 22px; margin-left: 4px; color: #0b62dd; }
.filter { width: 2062px; margin-top: 46px; height: 68px; border-top: 2px solid #dadce0; display: flex; align-items: center; padding: 0 0 2px 35px; }
.fi { width: 24px; height: 20px; color: #5f6368; }
.filter b { font-weight: 500; margin: 0 22px 0 9px; }
.filter span { color: #757a80; }
.fh { width: 29px; height: 29px; margin-left: auto; color: #5f6368; }
.filter i { width: 2px; height: 40px; background: #dadce0; margin: 0 36px 0 33px; }
.fc { width: 21px; height: 21px; margin-right: 36px; color: #3c4043; }
.table { position: relative; width: 2062px; }
.tr { display: grid; grid-template-columns: 107px 497px 146px 149px 146px 558px 193px 166px 100px; white-space: nowrap; }
.th { height: 48px; background: #f1f3f4; border: 1px solid #dadce0; border-width: 2px 0; font-weight: 500; line-height: 43px; }
.th svg { width: 24px; height: 24px; vertical-align: -5px; margin-left: 8px; }
.td { height: 182px; border-bottom: 2px solid #dadce0; color: #5f6368; line-height: 33.600px; padding-top: 7px; }
.td > div { height: 173px; }
.ck i { display: block; width: 26px; height: 27px; margin: 10px 0 0 34px; border: 3px solid #202124; border-radius: 3px; }
.td .ck i { margin-top: 3px; }
.td a { line-height: 29px; display: inline-block; }
.key { width: 24px; height: 24px; vertical-align: -5px; margin: 0 9px 0 3px; }
.st { display: flex; width: 80px; white-space: normal; padding-left: 2px; gap: 4px; }
.st svg { width: 24px; height: 24px; margin-top: 4px; }
.clip { overflow: hidden; }
.th .clip { letter-spacing: .25px; }
.ops { border-left: 1px solid #dadce0; padding-left: 26px; }
.td .ops { margin-top: -7px; height: 181px; padding: 8px 0 0 30px; color: #202124; }
.ops svg { width: 32px; height: 32px; }
.hbar { width: 1932px; height: 15px; margin: 10px 0 0 1px; background: #c9c9c9; border: 1px solid #b8b8b8; border-width: 2px 1px 0; }
.patch { position: absolute; background: #fff; }
.patch.top { left: 1389px; top: -2px; width: 235px; height: 150px; }
.patch.low { left: 609px; top: 190px; width: 606px; height: 70px; }

/* Tutorial panel */
.panel { width: 502px; border-left: 2px solid #dadce0; display: flex; flex-direction: column; }
.phead { height: 82px; flex: none; border-bottom: 2px solid #dadce0; display: flex; align-items: center; padding-left: 26px; color: #757575; }
.pc { width: 40px; height: 40px; margin-top: 5px; }
.phead div { margin: 1px 0 0 20px; display: flex; flex-direction: column; }
.phead small { font-size: 16.500px; line-height: 20px; }
.phead b { font-weight: 500; color: #202124; line-height: 28px; }
.pi { width: 38px; height: 38px; margin: 8px 0 0 auto; }
.px { width: 40px; height: 40px; margin: 8px 27px 0 27px; }
.pbody { flex: 1; min-height: 0; display: flex; }
.plist { flex: 1; padding-left: 26px; overflow: hidden; }
.plist h3 { padding-top: 11px; height: 50px; }
article { width: 419px; display: flex; gap: 16px; padding: 29px 0 17.500px 4px; border-bottom: 2px solid #e8eaed; color: #5f6368; }
article > svg { width: 26px; height: 26px; margin-top: 5px; }
article > div { flex: 1; min-width: 0; padding-left: 1px; white-space: nowrap; }
h4 { font-size: 23.400px; line-height: 34px; color: #1a73e8; letter-spacing: .2px; }
h4 svg { width: 20px; height: 20px; vertical-align: 1px; }
article em { display: block; width: 119px; height: 37px; border-radius: 19px; margin: 14px 0 13px -1px; background: #f1f3f4; font-size: 19.800px; line-height: 35px; letter-spacing: .5px; text-align: center; }
article p { font-size: 19.800px; line-height: 27.500px; letter-spacing: .65px; color: #3c4043; white-space: normal; width: 384px; word-break: break-all; }
code { font: 20px/24px "Liberation Mono", monospace; letter-spacing: .2px; background: #f8f9fa; color: #188038; padding: 1px 8px; margin-left: -1px; }
.pscroll { width: 28px; background: #fcfcfc; display: flex; flex-direction: column; align-items: center; color: #8b8b8b; padding: 8px 0 7px; }
.pscroll svg { width: 16px; height: 13px; }
.pscroll i { width: 16px; height: 897px; border-radius: 8px; background: #8b8b8b; margin: 13px 0 auto; }

/* Toast */
.toast { position: absolute; left: 933px; top: 1508px; width: 707px; height: 87px; border-radius: 6px; background: #202124; color: #fff; display: flex; align-items: center; justify-content: space-between; padding: 0 31px 0 27px; box-shadow: 0 6px 12px rgba(0,0,0,.28), 0 2px 40px rgba(0,0,0,.16); }
.toast svg { width: 36px; height: 36px; margin-right: -2px; }

/* Taskbar */
.taskbar { flex: none; height: 89px; position: relative; border-top: 2px solid #454b40; background: linear-gradient(90deg, #1d3214 0, #232d18 12%, #1f2f1c 25%, #222917 34%, #1c2c17 45%, #24261a 62%, #1c2a16 72%, #2a2422 83%, #212a17 87%, #212a17 100%); }
.apps { display: grid; grid-template-columns: repeat(11, 81.360px); padding-left: 1090px; height: 100%; }
.apps > div { position: relative; display: grid; place-items: center; }
.apps svg { width: 44px; height: 44px; font-family: "Liberation Mono", monospace; }
.apps .start svg { width: 42px; height: 42px; }
.apps > div::after { content: ""; position: absolute; left: 50%; top: 71px; width: 11px; height: 6px; margin-left: -5px; border-radius: 3px; background: #9aa093; }
.apps .start::after { display: none; }
.apps .cur::after { width: 30px; margin-left: -15px; background: #c3c47e; }
.apps .cur::before { content: ""; position: absolute; inset: 5px 3px 8px 4px; border-radius: 8px; background: rgba(255,255,255,.08); border: 1px solid rgba(255,255,255,.06); }
.apps .cur svg { position: relative; }
.tray { position: absolute; left: 2579px; top: 0; height: 87px; display: grid; align-items: center; justify-items: center; grid-template-columns: 40px 80px 66px 67px 24px 66px 113px; color: #fff; }
.t20 { width: 20px; } .t34 { width: 34px; } .t28 { width: 28px; } .t32 { width: 32px; }
.ime { font-size: 29px; line-height: 29px; }
.clock { justify-self: end; text-align: right; font: 21px/30px "Open Sans", sans-serif; letter-spacing: -.2px; }
.wm { position: absolute; left: 2674px; top: 2px; font: 56px/64px "Liberation Sans", "Noto Sans CJK SC", sans-serif; letter-spacing: .3px; color: rgba(205,205,205,.85); white-space: nowrap; }
```
